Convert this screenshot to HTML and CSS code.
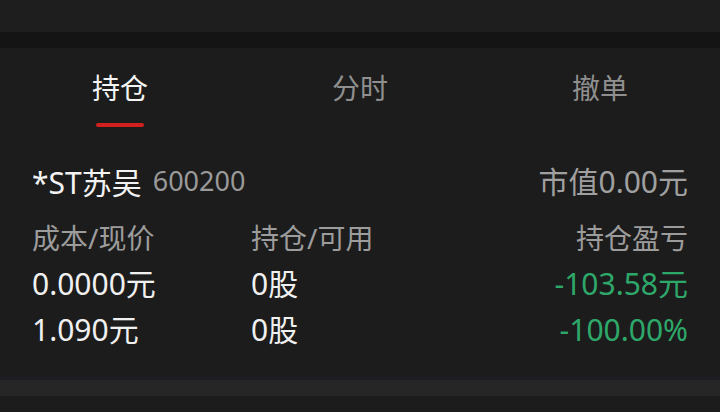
FILE: index.html
```html
<!DOCTYPE html>
<html>
<head>
	<meta charset="UTF-8">
	<title>持仓</title>
	<link rel="stylesheet" href="styles.css">
</head>
<body>
	<div class="top">
		<div class="top-text">总资产</div>
	</div>
	<div class="gap"></div>
	<div class="panel">
		<div class="tabs">
			<div class="tab active">持仓<span class="bar"></span></div>
			<div class="tab">分时</div>
			<div class="tab">撤单</div>
		</div>
		<div class="stock">
			<div class="name">*ST苏吴<span class="code">600200</span></div>
			<div class="mv">市值0.00元</div>
		</div>
		<div class="grid">
			<div class="label">成本/现价</div>
			<div class="label">持仓/可用</div>
			<div class="label right">持仓盈亏</div>

			<div class="val">0.0000元</div>
			<div class="val">0股</div>
			<div class="val right down">-103.58元</div>

			<div class="val">1.090元</div>
			<div class="val">0股</div>
			<div class="val right down">-100.00%</div>
		</div>
	</div>
	<div class="sep"></div>
	<div class="bottom"></div>
</body>
</html>
```

FILE: styles.css
```css
* {
	box-sizing: border-box;
}

body {
	margin: 0;
	background: #1c1c1c;
	font-family: "Noto Sans", "Noto Sans CJK SC", sans-serif;
	color: #eeeeee;
	overflow: hidden;
}

.top {
	height: 32px;
	background: #1e1e1e;
	overflow: hidden;
}

.top-text {
	margin-top: -26px;
	padding-left: 44px;
	font-size: 23px;
	line-height: 28px;
	color: #555555;
}

.gap {
	height: 16px;
	background: #141414;
}

.panel {
	background: #1c1c1c;
	padding-bottom: 24px;
}

/* tabs */

.tabs {
	display: flex;
}

.tab {
	flex: 1;
	display: flex;
	flex-direction: column;
	align-items: center;
	padding-top: 20px;
	font-size: 28px;
	line-height: 40px;
	color: #8f8f8f;
}

.tab.active {
	color: #f4f4f4;
}

.tab .bar {
	display: block;
	width: 48px;
	height: 4px;
	margin-top: 15px;
	border-radius: 2px;
	background: #d41f1f;
}

/* stock */

.stock {
	display: flex;
	justify-content: space-between;
	align-items: center;
	margin-top: 34px;
	padding: 0 32px;
	line-height: 40px;
}

.name {
	font-size: 30px;
	color: #f2f2f2;
}

.code {
	margin-left: 11px;
	font-size: 27px;
	color: #9a9a9a;
	vertical-align: 3px;
}

.mv {
	font-size: 30px;
	color: #a0a0a0;
}

.grid {
	display: grid;
	grid-template-columns: 219px 1fr auto;
	margin-top: 12px;
	padding: 0 32px;
	line-height: 46px;
}

.label {
	font-size: 28px;
	color: #9c9c9c;
}

.val {
	font-size: 30px;
	color: #f0f0f0;
}

.right {
	text-align: right;
}

.down {
	color: #2ea86a;
}

.sep {
	height: 3px;
	background: #1d1d26;
}

.bottom {
	height: 16px;
	background: #262626;
}
```
